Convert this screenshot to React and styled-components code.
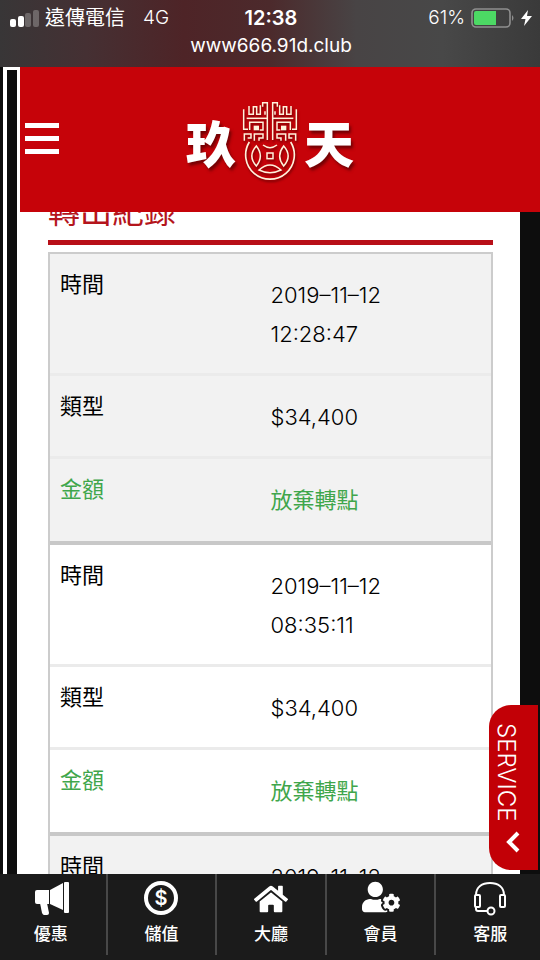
import React, { useState } from "react";
import styled, { createGlobalStyle } from "styled-components";
import { FaHome, FaUserCog } from "react-icons/fa";

const GlobalStyle = createGlobalStyle`
  * {
    box-sizing: border-box;
  }

  body {
    margin: 0;
    background: #0d0d0d;
    font-family: Inter, "Noto Sans CJK TC", sans-serif;
  }
`;

const Container = styled.div`
  display: flex;
  flex-direction: column;
  height: 100vh;
  overflow: hidden;
`;

//status bar
const StatusBar = styled.div`
  display: grid;
  grid-template-columns: 1fr auto 1fr;
  align-items: center;
  padding: 4px 8px 8px 10px;

  color: #fff;
  font-size: 19px;
  line-height: 28px;
  background: linear-gradient(
    90deg,
    #383637 0%,
    #453033 16%,
    #4e2427 34%,
    #4c2a2c 50%,
    #484445 66%,
    #484848 82%,
    #3a3a3a 100%
  );
`;

const Carrier = styled.div`
  display: flex;
  align-items: center;
  gap: 6px;

  span {
    font-size: 20px;
  }

  span + span {
    margin-left: 12px;
    font-size: 19px;
    font-weight: 300;
  }
`;

const Clock = styled.div`
  font-size: 20px;
  font-weight: 600;
`;

const Power = styled.div`
  display: flex;
  align-items: center;
  justify-content: flex-end;
  gap: 6px;
  font-weight: 300;
`;

const Url = styled.div`
  grid-column: 1 / -1;
  line-height: 27px;
  text-align: center;
`;

//main
const Main = styled.div`
  display: flex;
  flex: 1;
  min-height: 0;
`;

const Rail = styled.div`
  width: 17px;
  margin-left: 3px;
  border: solid #fff;
  border-width: 3px 3px 0 4px;
  background: #0d0d0d;
`;

const Page = styled.div`
  display: flex;
  flex: 1;
  flex-direction: column;
  min-width: 0;
`;

const Header = styled.header`
  display: grid;
  grid-template-columns: 1fr auto 1fr;
  align-items: center;
  height: 145px;
  padding: 0 25px 2px 5px;
  background: #c60309;
`;

const MenuBtn = styled.button`
  display: grid;
  gap: 8px;
  width: 34px;
  padding: 0;
  border: 0;
  background: none;
  cursor: pointer;
`;

const MenuLine = styled.span`
  height: 5px;
  background: #fff;
`;

const Logo = styled.a`
  display: flex;
  align-items: center;
  gap: 4px;
  padding-top: 4px;

  color: #fff;
  font-family: "Noto Sans CJK TC", sans-serif;
  font-size: 50px;
  font-weight: 900;
  line-height: 60px;
  text-decoration: none;
  text-shadow: 2px 3px 3px rgba(60, 0, 0, 0.6);

  svg {
    filter: drop-shadow(1px 2px 1px rgba(60, 0, 0, 0.6));
  }
`;

const Content = styled.main`
  flex: 1;
  min-height: 0;
  overflow: hidden;
  margin: 0 20px 0 -3px;
  padding: 0 27px 0 31px;
  background: #fff;
`;

const Title = styled.h1`
  margin: -22px 0 7px;
  padding-bottom: 6px;
  border-bottom: 5px solid #b80f18;

  color: #b4151c;
  font-size: 32px;
  font-weight: 400;
  line-height: 44px;
`;

const Records = styled.table`
  width: 100%;
  table-layout: fixed;
  border-spacing: 0;
  border: 2px solid #ccc;

  font-size: 22px;
  line-height: 39px;
`;

const Label = styled.th`
  width: 50%;
  padding: 11px 10px 0;
  border-bottom: 3px solid #ebebeb;
  font-weight: 400;
  text-align: left;
  vertical-align: top;
`;

const Value = styled.td`
  padding: 22px 80px 19px 0;
  border-bottom: 3px solid #ebebeb;
  font-weight: ${(props) => (props.$green ? 400 : 300)};
`;

const Group = styled.tbody`
  background: #fff;

  &:nth-child(odd) {
    background: #f2f2f2;
  }

  tr:last-child > * {
    border-bottom: 4px solid #c8c8c8;
  }

  tr:last-child > td {
    padding-bottom: 21px;
  }
`;

const Row = styled.tr`
  color: ${(props) => (props.$green ? "#3fa64b" : "#000")};
`;

//service
const ServiceBtn = styled.button`
  position: absolute;
  right: 2px;
  bottom: 90px;

  display: flex;
  align-items: flex-start;
  gap: 10px;
  writing-mode: vertical-rl;
  width: 49px;
  height: 165px;
  padding: 18px 18px 14px 0;
  border: 0;
  border-radius: 22px 0 0 22px;

  color: #fff;
  background: #c20006;
  font-family: Inter, sans-serif;
  font-size: 24px;
  font-weight: 300;
  line-height: 28px;
  cursor: pointer;
`;

//bottom nav
const Nav = styled.nav`
  display: grid;
  grid-template-columns: repeat(5, 1fr);
  margin: 0 -4px;
  padding-bottom: 5px;
  background: #1b1b1b;
`;

const NavItem = styled.a`
  display: flex;
  flex-direction: column;
  align-items: center;
  height: 81px;
  padding-top: 6px;

  color: #fff;
  font-size: 17px;
  font-weight: 500;
  line-height: 24px;
  text-decoration: none;

  & + & {
    border-left: 2px solid #484848;
  }
`;

const IconBox = styled.span`
  display: flex;
  align-items: flex-end;
  justify-content: center;
  height: 36px;
  margin-bottom: 6px;
`;

const records = [
  { date: "2019–11–12", time: "12:28:47", amount: "$34,400", state: "放棄轉點" },
  { date: "2019–11–12", time: "08:35:11", amount: "$34,400", state: "放棄轉點" },
  { date: "2019–11–12", time: "", amount: "", state: "" },
];

const SignalIcon = () => (
  <svg width="29" height="17" viewBox="0 0 29 17" fill="#fff">
    <rect x="0" y="9" width="6" height="8" rx="2" />
    <rect x="8" y="6" width="6" height="11" rx="2" />
    <rect x="15" y="3" width="6" height="14" rx="2" opacity="0.25" />
    <rect x="23" y="0" width="6" height="17" rx="2" opacity="0.25" />
  </svg>
);

const BatteryIcon = () => (
  <svg width="44" height="20" viewBox="0 0 44 20">
    <rect x="1" y="1" width="38" height="18" rx="4" fill="none" stroke="#8f8f8f" strokeWidth="1.6" />
    <path d="M3 5q0-2 2-2h20v14H5q-2 0-2-2z" fill="#4cd964" />
    <path d="M41 7q3 3 0 6z" fill="#8f8f8f" />
  </svg>
);

const BoltIcon = () => (
  <svg width="11" height="16" viewBox="0 0 11 16" fill="#fff">
    <path d="M7 0 0 9h4.500L3 16l8-10H6z" />
  </svg>
);

const EmblemHalf = () => (
  <>
    <path d="M220 70V130H233" />
    <path d="M236 60V85H249V62H259V85H270V58" />
    <path d="M229 97H292" />
    <path d="M291 162V50H277V62" />
    <path d="M284 76V86" />
    <path d="M238 132V109H278V132H268" />
    <path d="M222 164V144H242V156H232" />
    <path d="M252 164V144H278V156H266V164" />
    <rect x="250" y="119" width="16" height="14" fill="#fff2dc" stroke="none" />
    <path d="M258 180Q231 210 258 240Q282 210 258 180Z" />
  </>
);

const Emblem = () => (
  <svg
    width="60"
    height="82"
    viewBox="209 42 180 246"
    fill="none"
    stroke="#fff2dc"
    strokeWidth="4.500"
  >
    <EmblemHalf />
    <g transform="matrix(-1 0 0 1 598 0)">
      <EmblemHalf />
    </g>
    <path d="M237 168A73 73 0 1 0 361 168" strokeWidth="5" />
    <path d="M278 177Q299 193 320 177" />
    <path d="M266 252Q299 222 332 252Q299 268 266 252Z" />
    <rect x="290" y="201" width="18" height="17" />
  </svg>
);

const HornIcon = () => (
  <svg width="40" height="36" viewBox="0 0 40 36" fill="#fff">
    <path d="M6 10h12v14H6q-2 0-2-2V12q0-2 2-2z" />
    <path d="M9 23h7l2 10q0 2-2 2h-3q-1 0-2-2z" />
    <path d="M19 10 32 3v27L19 24z" />
    <rect x="33" y="2" width="5" height="31" rx="1" />
  </svg>
);

const CoinIcon = () => (
  <svg width="40" height="36" viewBox="0 0 40 36">
    <circle cx="20" cy="18" r="15" fill="none" stroke="#fff" strokeWidth="4" />
    <text x="20" y="25" fill="#fff" fontSize="20" fontWeight="600" textAnchor="middle">
      $
    </text>
  </svg>
);

const HeadsetIcon = () => (
  <svg width="40" height="36" viewBox="0 0 40 36" fill="none" stroke="#fff" strokeWidth="2">
    <path d="M6 15C6 7 12 3 20 3s14 4 14 12" />
    <rect x="5" y="15" width="5" height="12" rx="1" />
    <rect x="30" y="15" width="5" height="12" rx="1" />
    <path d="M6 27v2q0 2 2 2h10" />
    <circle cx="21" cy="31" r="3.500" />
  </svg>
);

const menus = [
  { name: "優惠", icon: <HornIcon /> },
  { name: "儲值", icon: <CoinIcon /> },
  { name: "大廳", icon: <FaHome size={34} /> },
  { name: "會員", icon: <FaUserCog size={38} /> },
  { name: "客服", icon: <HeadsetIcon /> },
];

const App = () => {
  const [current, setCurrent] = useState("大廳");

  return (
    <Container>
      <GlobalStyle />
      <StatusBar>
        <Carrier>
          <SignalIcon />
          <span>遠傳電信</span>
          <span>4G</span>
        </Carrier>
        <Clock>12:38</Clock>
        <Power>
          61%
          <BatteryIcon />
          <BoltIcon />
        </Power>
        <Url>www666.91d.club</Url>
      </StatusBar>

      <Main>
        <Rail />
        <Page>
          <Header>
            <MenuBtn type="button" aria-label="選單">
              <MenuLine />
              <MenuLine />
              <MenuLine />
            </MenuBtn>
            <Logo href="#">
              <span>玖</span>
              <Emblem />
              <span>天</span>
            </Logo>
          </Header>

          <Content>
            <Title>轉出紀錄</Title>
            <Records>
              {records.map((record, index) => (
                <Group key={index}>
                  <Row>
                    <Label scope="row">時間</Label>
                    <Value>
                      {record.date} {record.time}
                    </Value>
                  </Row>
                  {record.amount && (
                    <Row>
                      <Label scope="row">類型</Label>
                      <Value>{record.amount}</Value>
                    </Row>
                  )}
                  {record.state && (
                    <Row $green>
                      <Label scope="row">金額</Label>
                      <Value $green>{record.state}</Value>
                    </Row>
                  )}
                </Group>
              ))}
            </Records>
          </Content>
        </Page>
      </Main>

      <ServiceBtn type="button">
        SERVICE
        <svg width="14" height="22" viewBox="0 0 14 22" fill="none" stroke="#fff" strokeWidth="4">
          <path d="M12 2 3 11l9 9" />
        </svg>
      </ServiceBtn>

      <Nav>
        {menus.map((menu) => (
          <NavItem
            key={menu.name}
            href="#"
            aria-current={menu.name === current ? "page" : undefined}
            onClick={() => setCurrent(menu.name)}
          >
            <IconBox>{menu.icon}</IconBox>
            {menu.name}
          </NavItem>
        ))}
      </Nav>
    </Container>
  );
};

export default App;
